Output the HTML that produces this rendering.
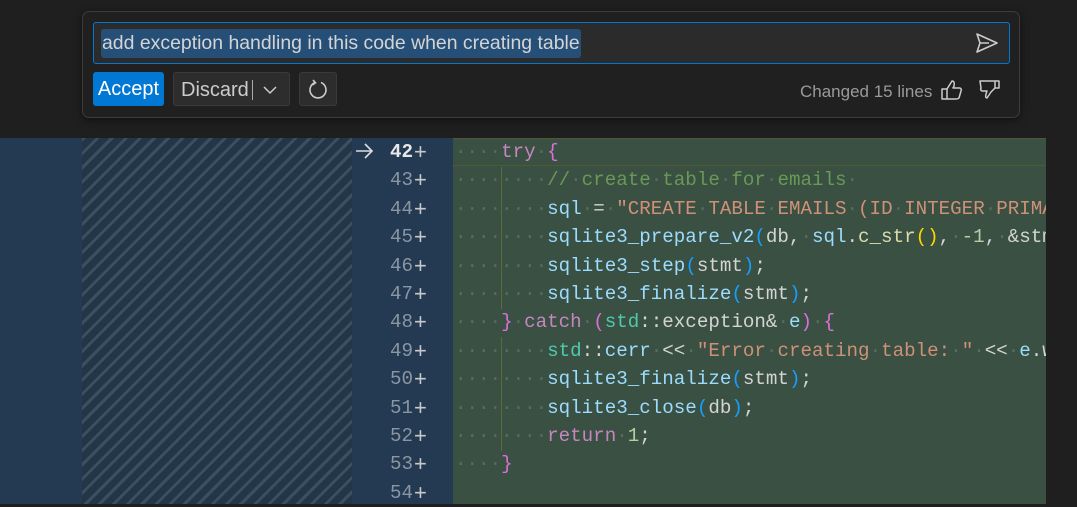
<!DOCTYPE html>
<html><head><meta charset="utf-8"><style>
body{margin:0;width:1077px;height:504px;background:#1f1f1f;overflow:hidden;position:relative;font-family:"Liberation Sans",sans-serif}
.top{position:absolute;left:0;top:0;width:1077px;height:138px;background:#1f1f1f}
.widget{position:absolute;left:82px;top:11px;width:936px;height:105px;border:1px solid #3c3c3c;border-radius:7px;background:#202020;box-shadow:0 2px 8px rgba(0,0,0,.5)}
.input{position:absolute;left:10px;top:10px;width:915px;height:40px;border:1px solid #0078d4;border-radius:3px;background:#2b2b2b}
.sel{position:absolute;left:7px;top:6px;height:29px;line-height:29px;padding:0 1px;background:#264f78;border-radius:3px;color:#d4d4d4;font-size:19.45px}
.btn{position:absolute;top:60px;height:34px;border-radius:3px;font-size:20px;line-height:34px;box-sizing:border-box}
.acc{left:10px;width:71px;background:#0078d4;color:#fff;text-align:center}
.dis{left:90px;width:117px;background:#2d2d2d;border:1px solid #3a3a3a;color:#ccc;padding-left:7px}
.ref{left:216px;width:38px;background:#2d2d2d;border:1px solid #3a3a3a}
.chg{position:absolute;left:717px;top:70px;color:#9a9a9a;font-size:17px}
.leftb{position:absolute;left:0;top:138px;width:82px;height:366px;background:#233a52}
.hatch{position:absolute;left:82px;top:138px;width:270px;height:366px;background:repeating-linear-gradient(-45deg,#233648 0 7px,#3b4f60 7px 10px)}
.gut{position:absolute;left:352px;top:138px;width:101px;height:366px;background:#233a52}
.code{position:absolute;left:453px;top:138px;width:593px;height:366px;background:#3a5043;overflow:hidden}
.right{position:absolute;left:1046px;top:138px;width:31px;height:366px;background:#1f1f1f}
.ln{position:absolute;left:352px;width:61px;text-align:right;color:#8a96a3;font:19.2px/28.4px "Liberation Mono",monospace}
.pl{position:absolute;left:414px;color:#c8c8c8;font:22px/28.4px "Liberation Sans",sans-serif}
.l{position:absolute;left:2px;white-space:pre;font:19.2px/28.4px "Liberation Mono",monospace;color:#d4d4d4}
.d{color:#546e5b}.k{color:#c586c0}.c{color:#6a9955}.v{color:#9cdcfe}.s{color:#ce9178}.y{color:#dcdcaa}.b{color:#179fff}.g{color:#ffd700}.t{color:#4ec9b0}.n{color:#b5cea8}.p{color:#da70d6}
.guide{position:absolute;left:48px;width:1px;background:#5e6a3c}
</style></head><body>
<div class="top"></div>
<div class="widget">
 <div class="input"><div class="sel">add exception handling in this code when creating table</div>
  <svg style="position:absolute;left:881px;top:9px" width="24" height="22" viewBox="0 0 24 22"><path d="M2 2 L22 11 L2 20 L5 11 Z M5 11 H14" fill="none" stroke="#ccc" stroke-width="1.6" stroke-linejoin="round"/></svg>
 </div>
 <div class="btn acc">Accept</div>
 <div class="btn dis">Discard<span style="position:absolute;left:78px;top:7px;width:1px;height:20px;background:#aaa"></span><svg style="position:absolute;left:88px;top:11px" width="16" height="12"><path d="M2 3 L8 9 L14 3" fill="none" stroke="#ccc" stroke-width="1.5"/></svg></div>
 <div class="btn ref"><svg style="position:absolute;left:7px;top:6px" width="22" height="22" viewBox="0 0 22 22"><path d="M8 3.5 A8 8 0 1 0 14 3.5" fill="none" stroke="#ccc" stroke-width="1.6"/><path d="M6 1 L8.5 3.8 L5.5 6" fill="none" stroke="#ccc" stroke-width="1.6"/></svg></div>
 <div class="chg">Changed 15 lines</div>
 <svg style="position:absolute;left:857px;top:66px" width="24" height="24" viewBox="0 0 24 24"><path d="M2 11 H7 V21 H2 Z M7 11 L12 3 Q15 3 14 8 L13 10 H20 Q22 11 21 13 L19 20 Q18 21 16 21 H7" fill="none" stroke="#ccc" stroke-width="1.5" stroke-linejoin="round"/></svg>
 <svg style="position:absolute;left:895px;top:66px" width="24" height="24" viewBox="0 0 24 24"><path d="M2 3 H21 V10 H17 L13 14 L9 20 Q7 20 8 16 L9 13 H4 Q2 12 3 10 Z M17 3 V10" fill="none" stroke="#ccc" stroke-width="1.5" stroke-linejoin="round"/></svg>
</div>
<div class="leftb"></div><div class="hatch"></div><div class="gut"></div>
<svg style="position:absolute;left:354px;top:143px" width="20" height="16"><path d="M2 8 H18 M11 1 L18 8 L11 15" fill="none" stroke="#ddd" stroke-width="1.6"/></svg>
<div class="ln" style="top:138px;color:#e8e8e8;font-weight:bold">42</div>
<div class="ln" style="top:166.4px">43</div>
<div class="ln" style="top:194.8px">44</div>
<div class="ln" style="top:223.2px">45</div>
<div class="ln" style="top:251.6px">46</div>
<div class="ln" style="top:280px">47</div>
<div class="ln" style="top:308.4px">48</div>
<div class="ln" style="top:336.8px">49</div>
<div class="ln" style="top:365.2px">50</div>
<div class="ln" style="top:393.6px">51</div>
<div class="ln" style="top:422px">52</div>
<div class="ln" style="top:450.4px">53</div>
<div class="ln" style="top:478.8px">54</div>
<div class="pl" style="top:138px">+</div><div class="pl" style="top:166.4px">+</div><div class="pl" style="top:194.8px">+</div><div class="pl" style="top:223.2px">+</div><div class="pl" style="top:251.6px">+</div><div class="pl" style="top:280px">+</div><div class="pl" style="top:308.4px">+</div><div class="pl" style="top:336.8px">+</div><div class="pl" style="top:365.2px">+</div><div class="pl" style="top:393.6px">+</div><div class="pl" style="top:422px">+</div><div class="pl" style="top:450.4px">+</div><div class="pl" style="top:478.8px">+</div>
<div class="code">
 <div style="position:absolute;left:0;top:0;width:593px;height:26px;border:1px solid #4f5a33;border-left:none"></div>
 <div class="guide" style="top:29px;height:142px"></div>
 <div class="guide" style="top:199px;height:114px"></div>
 <div class="l" style="top:0"><span class="d">····</span><span class="k">try</span><span class="d">·</span><span class="p">{</span></div>
 <div class="l" style="top:28.4px"><span class="d">········</span><span class="c">//<span class="d">·</span>create<span class="d">·</span>table<span class="d">·</span>for<span class="d">·</span>emails</span><span class="d">·</span></div>
 <div class="l" style="top:56.8px"><span class="d">········</span><span class="v">sql</span><span class="d">·</span>=<span class="d">·</span><span class="s">"CREATE<span class="d">·</span>TABLE<span class="d">·</span>EMAILS<span class="d">·</span>(ID<span class="d">·</span>INTEGER<span class="d">·</span>PRIMARY</span></div>
 <div class="l" style="top:85.2px"><span class="d">········</span><span class="v">sqlite3_prepare_v2</span><span class="b">(</span>db,<span class="d">·</span><span class="v">sql</span>.<span class="y">c_str</span><span class="g">()</span>,<span class="d">·</span><span class="n">-1</span>,<span class="d">·</span>&amp;stmt</div>
 <div class="l" style="top:113.6px"><span class="d">········</span><span class="v">sqlite3_step</span><span class="b">(</span>stmt<span class="b">)</span>;</div>
 <div class="l" style="top:142px"><span class="d">········</span><span class="v">sqlite3_finalize</span><span class="b">(</span>stmt<span class="b">)</span>;</div>
 <div class="l" style="top:170.4px"><span class="d">····</span><span class="p">}</span><span class="d">·</span><span class="k">catch</span><span class="d">·</span><span class="p">(</span><span class="t">std</span>::exception&amp;<span class="d">·</span><span class="v">e</span><span class="p">)</span><span class="d">·</span><span class="p">{</span></div>
 <div class="l" style="top:198.8px"><span class="d">········</span><span class="t">std</span>::<span class="v">cerr</span><span class="d">·</span>&lt;&lt;<span class="d">·</span><span class="s">"Error<span class="d">·</span>creating<span class="d">·</span>table:<span class="d">·</span>"</span><span class="d">·</span>&lt;&lt;<span class="d">·</span><span class="v">e</span>.what</div>
 <div class="l" style="top:227.2px"><span class="d">········</span><span class="v">sqlite3_finalize</span><span class="b">(</span>stmt<span class="b">)</span>;</div>
 <div class="l" style="top:255.6px"><span class="d">········</span><span class="v">sqlite3_close</span><span class="b">(</span>db<span class="b">)</span>;</div>
 <div class="l" style="top:284px"><span class="d">········</span><span class="k">return</span><span class="d">·</span><span class="n">1</span>;</div>
 <div class="l" style="top:312.4px"><span class="d">····</span><span class="p">}</span></div>
</div>
<div class="right"></div>
</body></html>
